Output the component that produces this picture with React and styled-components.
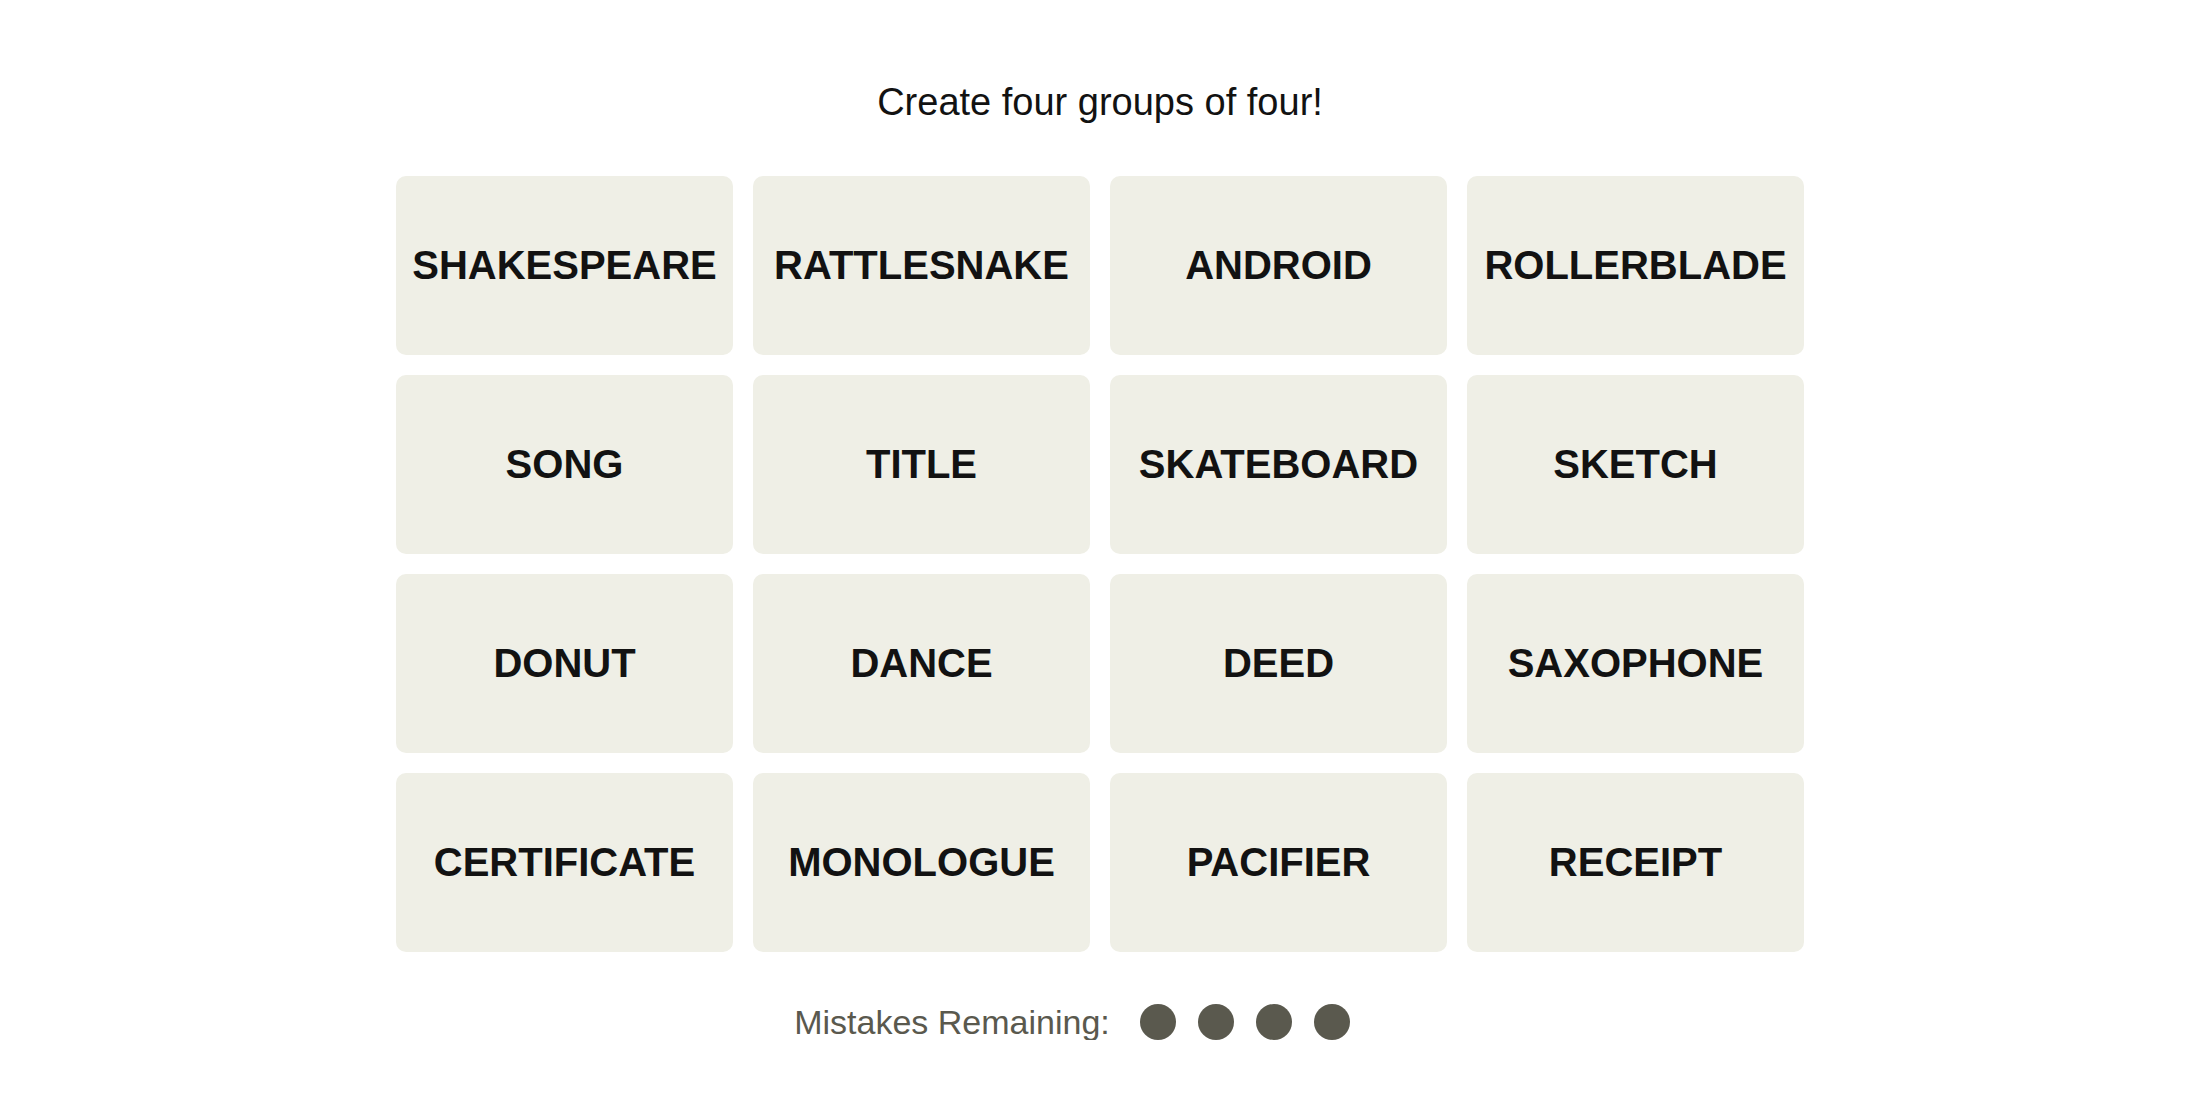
import React from "react";
import styled, { createGlobalStyle } from "styled-components";

const GlobalStyle = createGlobalStyle`
  html, body {
    margin: 0;
    padding: 0;
    background: #ffffff;
    font-family: "Liberation Sans", Arial, sans-serif;
    color: #121212;
  }
`;

const words = [
  "SHAKESPEARE", "RATTLESNAKE", "ANDROID", "ROLLERBLADE",
  "SONG", "TITLE", "SKATEBOARD", "SKETCH",
  "DONUT", "DANCE", "DEED", "SAXOPHONE",
  "CERTIFICATE", "MONOLOGUE", "PACIFIER", "RECEIPT",
];

const Page = styled.main`
  display: flex;
  flex-direction: column;
  align-items: center;
  padding-top: 83px;
`;

const Prompt = styled.h2`
  margin: 0;
  font-size: 38px;
  line-height: 38px;
  font-weight: 400;
  color: #121212;
`;

const Board = styled.div`
  display: grid;
  grid-template-columns: repeat(4, 337px);
  grid-auto-rows: 179px;
  gap: 20px;
  margin-top: 55px;
`;

const Tile = styled.button`
  display: flex;
  align-items: center;
  justify-content: center;
  border: none;
  border-radius: 10px;
  background: #efefe6;
  color: #121212;
  font-family: inherit;
  font-size: 40px;
  font-weight: 700;
  text-transform: uppercase;
  padding: 0;
  cursor: pointer;
  white-space: nowrap;
`;

const Mistakes = styled.div`
  display: flex;
  align-items: center;
  gap: 30px;
  margin-top: 52px;
`;

const Label = styled.span`
  font-size: 34px;
  line-height: 36px;
  color: #5a594e;
`;

const Bubbles = styled.div`
  display: flex;
  gap: 22px;
  width: 266px;
`;

const Bubble = styled.span`
  width: 36px;
  height: 36px;
  border-radius: 50%;
  background: ${(p) => (p.$used ? "transparent" : "#5a594e")};
`;

export default function App() {
  const remaining = 4;
  return (
    <>
      <GlobalStyle />
      <Page>
        <Prompt>Create four groups of four!</Prompt>
        <Board>
          {words.map((w) => (
            <Tile key={w}>{w}</Tile>
          ))}
        </Board>
        <Mistakes>
          <Label>Mistakes Remaining:</Label>
          <Bubbles>
            {[0, 1, 2, 3].map((i) => (
              <Bubble key={i} $used={i >= remaining} />
            ))}
          </Bubbles>
        </Mistakes>
      </Page>
    </>
  );
}
